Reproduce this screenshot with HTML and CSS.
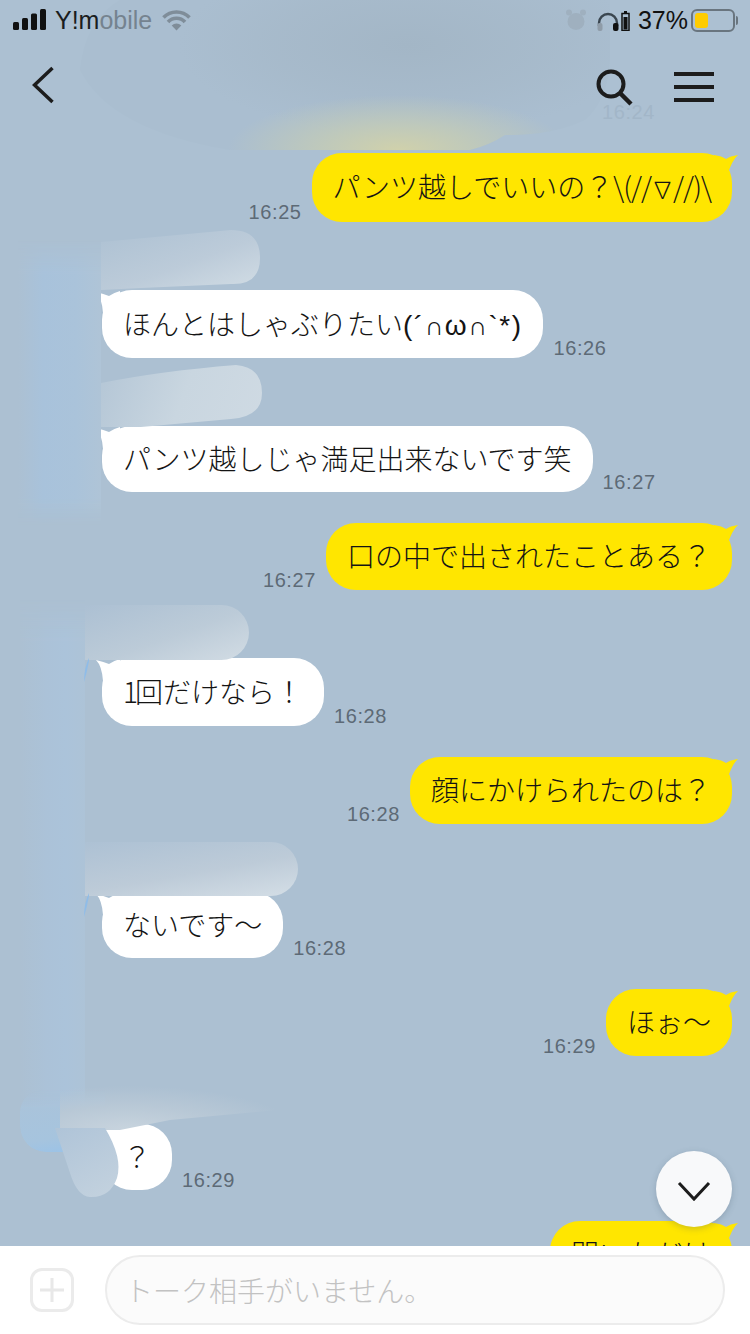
FILE: index.html
```html
<!DOCTYPE html>
<html lang="ja">
<head>
<meta charset="utf-8">
<title>トーク</title>
<link rel="stylesheet" href="styles.css">
</head>
<body>
<div class="phone">
  <main class="list">
    <div class="row me h69"><span class="time">16:25</span><div class="bubble"><span>パンツ越しでいいの？<span class="kao">\(//<span class="nabla">∇</span>//)\</span></span></div></div>
    <div class="row them h68"><div class="bubble"><span>ほんとはしゃぶりたい<span class="face">(´<span class="cap">∩</span>ω<span class="cap">∩</span>`*)</span></span></div><span class="time">16:26</span></div>
    <div class="row them h66"><div class="bubble">パンツ越しじゃ満足出来ないです笑</div><span class="time">16:27</span></div>
    <div class="row me"><span class="time">16:27</span><div class="bubble">口の中で出されたことある？</div></div>
    <div class="row them h68"><div class="bubble"><span><span class="one">1</span>回だけなら！</span></div><span class="time">16:28</span></div>
    <div class="row me"><span class="time">16:28</span><div class="bubble">顔にかけられたのは？</div></div>
    <div class="row them h66"><div class="bubble">ないです〜</div><span class="time">16:28</span></div>
    <div class="row me"><span class="time">16:29</span><div class="bubble">ほぉ〜</div></div>
    <div class="row them h66"><div class="bubble">？</div><span class="time">16:29</span></div>
    <div class="row me"><div class="bubble">聞いただけ</div></div>
  </main>

  <div class="smudge s-top"></div>
  <span class="ghost-time">16:24</span>
  <div class="smudge s-left1"></div>
  <div class="smudge s-streak1"></div>
  <div class="smudge s-streak2"></div>
  <div class="smudge s-left2"></div>
  <div class="smudge s-streak3"></div>
  <div class="smudge s-streak4"></div>
  <div class="smudge s-sliver s-sliver-a"></div>
  <div class="smudge s-sliver s-sliver-b"></div>
  <div class="smudge s-blob"></div>
  <div class="smudge s-streak5"></div>
  <div class="smudge s-finger"></div>

  <header class="top">
    <div class="status">
      <div class="status-left">
        <svg class="signal" width="34" height="21" viewBox="0 0 34 21"><rect x="0" y="13" width="6" height="8" rx="1.500"/><rect x="9" y="9" width="6" height="12" rx="1.500"/><rect x="18" y="4.500" width="6" height="16.500" rx="1.500"/><rect x="27" y="0" width="6" height="21" rx="1.500"/></svg>
        <span class="carrier">Y!m<span class="faded">obile</span></span>
        <svg class="wifi" width="29" height="22" viewBox="0 0 29 22"><path d="M1.500 8.500a18 18 0 0 1 26 0M6 13a11.500 11.500 0 0 1 17 0" fill="none" stroke="#7f8d99" stroke-width="3.600"/><path d="M14.500 21.500l-4.800-5a7 7 0 0 1 9.600 0z" fill="#7f8d99"/></svg>
      </div>
      <div class="status-right">
        <svg class="alarm" width="22" height="24" viewBox="0 0 22 24"><circle cx="11" cy="13.500" r="8.500" fill="#9fb0bf"/><circle cx="4" cy="4.500" r="3" fill="#9fb0bf"/><circle cx="18" cy="4.500" r="3" fill="#9fb0bf"/></svg>
        <svg class="phones" width="22" height="20" viewBox="0 0 22 20"><path d="M2 14v-3a9 9 0 0 1 18 0v3" fill="none" stroke="#3a4650" stroke-width="2.400"/><rect x="0.500" y="11" width="5" height="8" rx="2" fill="#8f9ca8"/><rect x="16" y="11" width="5.500" height="8" rx="2" fill="#111"/></svg>
        <svg class="minibat" width="9" height="20" viewBox="0 0 9 20"><rect x="3" y="0" width="3" height="2" fill="#111"/><rect x="1" y="2.500" width="7" height="17" fill="none" stroke="#111" stroke-width="1.500"/><rect x="2.500" y="6" width="4" height="12.500" fill="#111"/></svg>
        <span class="pct">37%</span>
        <div class="battery"><div class="battery-fill"></div></div>
      </div>
    </div>
    <nav class="nav">
      <svg class="back" width="22" height="38" viewBox="0 0 22 38"><path d="M20.500 2L2.500 19l18 17" fill="none" stroke="#1c1c1c" stroke-width="3.500"/></svg>
      <div class="nav-right">
        <svg class="search" width="38" height="38" viewBox="0 0 38 38"><circle cx="16" cy="15" r="12.500" fill="none" stroke="#1c1c1c" stroke-width="4"/><path d="M25 24l11 11" stroke="#1c1c1c" stroke-width="4.500"/></svg>
        <svg class="menu" width="40" height="30" viewBox="0 0 40 30"><path d="M0 2h40M0 15h40M0 28h40" stroke="#1c1c1c" stroke-width="4"/></svg>
      </div>
    </nav>
  </header>

  <button class="scroll-down" aria-label="下へ"><svg width="34" height="22" viewBox="0 0 34 22"><path d="M2 3l15 16L32 3" fill="none" stroke="#1c1c1c" stroke-width="3"/></svg></button>

  <footer class="composer">
    <div class="plus"><svg width="26" height="26" viewBox="0 0 26 26"><path d="M13 1v24M1 13h24" stroke="#e8e8e8" stroke-width="3"/></svg></div>
    <div class="field">トーク相手がいません。</div>
  </footer>
</div>
</body>
</html>
```
FILE: styles.css
```css
* { box-sizing: border-box; }
html, body { margin: 0; padding: 0; }
body { font-family: "Noto Sans CJK JP", "Liberation Sans", sans-serif; }

.phone {
  position: relative;
  width: 750px;
  height: 1334px;
  overflow: hidden;
  background: #acc0d2;
  display: flex;
  flex-direction: column;
}

/* header */
.top {
  position: absolute;
  top: 0;
  left: 0;
  right: 0;
  z-index: 3;
}
.status {
  height: 40px;
  padding: 8px 13px 0 13px;
  display: flex;
  justify-content: space-between;
  align-items: flex-start;
}
.status-left, .status-right { display: flex; align-items: center; height: 25px; }
.signal { fill: #111; margin-top: -2px; }
.carrier {
  margin-left: 8px;
  font: 25px/25px "Liberation Sans", sans-serif;
  color: #1a1d20;
}
.faded { color: #75838f; }
.wifi { margin-left: 10px; margin-top: -2px; }
.alarm { margin-right: 10px; margin-top: -2px; }
.phones { margin-right: 2px; margin-top: 2px; }
.minibat { margin-right: 8px; margin-top: 1px; }
.pct { font: 25px/25px "Liberation Sans", sans-serif; color: #111; margin-right: 3px; }
.battery {
  position: relative;
  width: 44px;
  height: 23px;
  border: 2px solid #69757f;
  border-radius: 6px;
  padding: 2px;
  margin-right: 2px;
}
.battery::after {
  content: "";
  position: absolute;
  right: -5px;
  top: 5px;
  width: 2px;
  height: 9px;
  background: #69757f;
  border-radius: 0 2px 2px 0;
}
.battery-fill { width: 13px; height: 15px; background: #ffcc00; border-radius: 3px; }

.nav {
  padding: 26px 36px 0 32px;
  display: flex;
  justify-content: space-between;
  align-items: flex-start;
}
.nav-right { display: flex; align-items: center; gap: 41px; }
.search { margin-top: 3px; }
.menu { margin-top: 1px; }

/* messages */
.list {
  flex: 1;
  min-height: 0;
  overflow: hidden;
  padding: 153px 18px 0 102px;
  display: flex;
  flex-direction: column;
  gap: 31px;
}
.row {
  display: flex;
  align-items: flex-end;
  flex: none;
  gap: 10px;
  --h: 67px;
}
.row.h66 { --h: 66px; }
.row.h68 { --h: 68px; }
.row.h69 { --h: 69px; }
.row.me { justify-content: flex-end; }
.row.them { padding-top: 37px; }

.bubble {
  position: relative;
  height: var(--h);
  padding: 0 21px 3px;
  border-radius: 30px;
  display: flex;
  align-items: center;
  font-size: 28px;
  font-weight: 300;
  line-height: 40px;
  color: #141414;
  white-space: nowrap;
}
.kao { letter-spacing: -1px; }
.nabla { font-size: 23px; font-weight: 300; line-height: 1; }
.face { font-family: "Liberation Sans", "Noto Sans CJK JP", sans-serif; letter-spacing: 1.500px; line-height: 1; }
.cap { font-size: 26px; line-height: 1; }
.one { letter-spacing: -3px; }
.me .bubble { background: #ffe600; }
.them .bubble { background: #fff; }
.bubble::before {
  content: "";
  position: absolute;
  top: 1px;
  width: 24px;
  height: 22px;
}
.me .bubble::before {
  right: -6px;
  background: #ffe600;
  clip-path: path("M0 1 Q8 2 12 5 Q16 2 24 1 Q18 6 13 22 L0 22 Z");
}
.them .bubble::before {
  left: -6px;
  background: #fff;
  clip-path: path("M24 0 Q17 2 13 5 Q8 3 0 1 Q6 7 7 22 L24 22 Z");
}
.time {
  font: 20px/20px "Liberation Sans", sans-serif;
  letter-spacing: 0.6px;
  color: #5d6a76;
}

/* smudged-out regions */
.smudge { position: absolute; z-index: 1; }
.ghost-time {
  position: absolute;
  z-index: 1;
  left: 602px;
  top: 102px;
  font: 20px/20px "Liberation Sans", sans-serif;
  letter-spacing: 0.6px;
  color: #a2b6c8;
}
.s-top {
  left: 80px;
  top: 0;
  width: 530px;
  height: 150px;
  background:
    radial-gradient(ellipse 170px 55px at 60% 100%, #d0d1ab 0%, #bfc9bb 45%, rgba(172, 192, 210, 0) 100%),
    radial-gradient(ellipse 230px 90px at 62% 30%, #a3b6c6 0%, rgba(165, 184, 200, 0.6) 60%, rgba(172, 192, 210, 0) 100%),
    #aabed0;
  clip-path: path("M40 0 L530 0 L530 60 Q528 100 505 120 Q470 136 425 135 Q410 145 390 150 L150 150 Q30 130 0 70 Q5 20 40 0 Z");
}
.s-left1 {
  left: 18px;
  top: 240px;
  width: 83px;
  height: 285px;
  background: linear-gradient(90deg, #acc0d2 0%, #a8c2db 30%, #aac3da 70%, #afc4d7 100%);
  -webkit-mask-image: linear-gradient(180deg, transparent 0%, #000 12%, #000 90%, transparent 100%);
  mask-image: linear-gradient(180deg, transparent 0%, #000 12%, #000 90%, transparent 100%);
}
.s-streak1 {
  left: 101px;
  top: 230px;
  width: 159px;
  height: 60px;
  background: linear-gradient(160deg, #adc1d3 0%, #bccbd9 55%, #d2dde5 100%);
  clip-path: path("M0 12 L130 0 Q159 0 159 28 Q159 55 130 54 L40 58 L0 60 Z");
}
.s-streak2 {
  left: 101px;
  top: 365px;
  width: 161px;
  height: 70px;
  background: linear-gradient(110deg, #b4c6d6 0%, #c9d6e0 50%, #cfdae3 100%);
  clip-path: path("M0 18 Q60 6 135 0 Q161 2 161 28 Q161 52 130 54 L40 62 L0 62 Z");
}
.s-left2 {
  left: 20px;
  top: 600px;
  width: 65px;
  height: 510px;
  background: linear-gradient(90deg, #acc0d2 0%, #abc2d8 40%, #abc3da 70%, #adc3d7 100%);
  -webkit-mask-image: linear-gradient(180deg, transparent 0%, #000 8%, #000 100%);
  mask-image: linear-gradient(180deg, transparent 0%, #000 8%, #000 100%);
}
.s-streak3 {
  left: 85px;
  top: 605px;
  width: 164px;
  height: 55px;
  background: linear-gradient(160deg, #acc0d3 0%, #bccbd8 55%, #d2dce4 100%);
  border-radius: 0 28px 28px 0;
}
.s-streak4 {
  left: 85px;
  top: 842px;
  width: 213px;
  height: 54px;
  background: linear-gradient(170deg, #adc1d4 0%, #bdcbd8 55%, #d4dee6 100%);
  border-radius: 0 28px 28px 0;
}
.s-sliver {
  left: 84px;
  width: 5px;
  height: 24px;
  background: #8fbce8;
  clip-path: path("M5 0 L5 3 Q3 14 0 24 Q0 10 5 0 Z");
}
.s-sliver-a { top: 658px; }
.s-sliver-b { top: 893px; }
.s-blob {
  left: 20px;
  top: 1090px;
  width: 85px;
  height: 62px;
  border-radius: 22px 0 10px 26px;
  background: linear-gradient(170deg, #abc3d9 0%, #a6c4de 70%, #97c2ea 100%);
  -webkit-mask-image: linear-gradient(180deg, transparent 0%, #000 30%);
  mask-image: linear-gradient(180deg, transparent 0%, #000 30%);
}
.s-streak5 {
  left: 60px;
  top: 1080px;
  width: 240px;
  height: 50px;
  background: radial-gradient(ellipse 170px 44px at 28% 100%, #c8d4de 0%, #b8c8d6 55%, rgba(172, 192, 210, 0) 100%);
  clip-path: path("M0 0 L240 0 L240 28 L110 40 L60 50 L0 50 Z");
}
.s-finger {
  left: 55px;
  top: 1128px;
  width: 68px;
  height: 70px;
  background: linear-gradient(150deg, #afc4d8 0%, #c5d3df 100%);
  clip-path: path("M0 0 L50 0 Q68 30 62 50 Q55 70 35 69 Q22 68 15 45 Z");
}

/* scroll button */
.scroll-down {
  position: absolute;
  z-index: 4;
  left: 656px;
  top: 1151px;
  width: 76px;
  height: 76px;
  padding: 4px 0 0;
  border: 0;
  border-radius: 50%;
  background: #f8f9fa;
  box-shadow: 0 2px 6px rgba(60, 80, 100, 0.25);
  display: flex;
  align-items: center;
  justify-content: center;
}

/* composer */
.composer {
  position: relative;
  z-index: 2;
  flex: none;
  height: 88px;
  background: #fff;
  padding: 9px 25px 9px 30px;
  display: flex;
  align-items: center;
  gap: 31px;
}
.plus {
  width: 44px;
  height: 44px;
  flex: none;
  border: 3px solid #ebebeb;
  border-radius: 12px;
  display: flex;
  align-items: center;
  justify-content: center;
}
.field {
  flex: 1;
  height: 70px;
  border: 2px solid #ececec;
  border-radius: 35px;
  background: #fbfbfb;
  padding: 0 18px;
  display: flex;
  align-items: center;
  font-size: 28px;
  font-weight: 300;
  color: #c2c2c2;
}
```
